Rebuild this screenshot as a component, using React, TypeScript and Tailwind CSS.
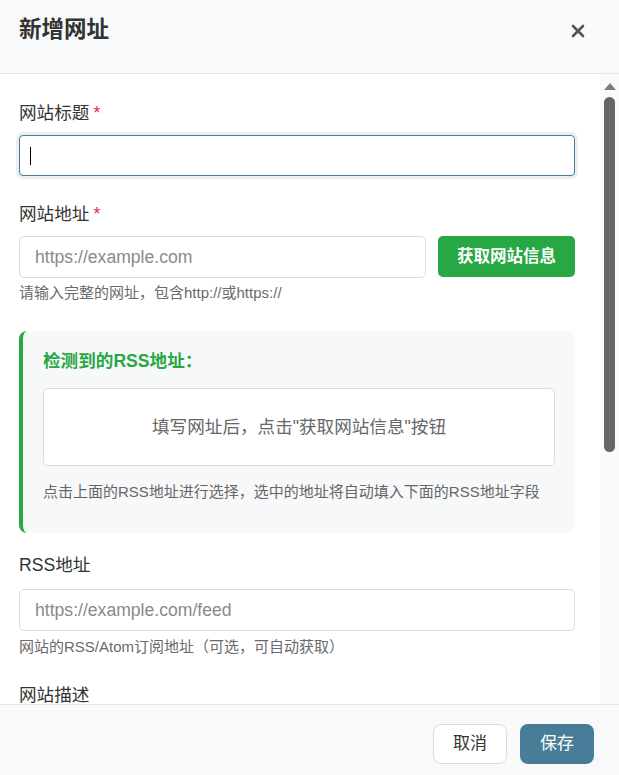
import React from "react";

const font = { fontFamily: '"Liberation Sans", "Noto Sans CJK SC", sans-serif' };

function Label({ text, required, mb = "mb-[9px]" }: { text: string; required?: boolean; mb?: string }) {
  return (
    <div className={`text-[17.6px] leading-[26px] text-[#333] ${mb}`}>
      {text}
      {required && <span className="text-[#dc3545] ml-[4px]">*</span>}
    </div>
  );
}

function Input({ placeholder, className = "" }: { placeholder?: string; className?: string }) {
  return (
    <input
      readOnly
      placeholder={placeholder}
      className={`block w-full h-[42px] rounded-[5px] border border-[#dcdcdc] bg-white px-[15px] text-[17.6px] text-[#333] placeholder:text-[#8a8a8a] outline-none ${className}`}
    />
  );
}

export default function App() {
  return (
    <div className="w-[619px] h-[775px] overflow-hidden bg-white flex flex-col" style={font}>
      {/* Header */}
      <div className="flex-none h-[74px] bg-[#f8f9fa] border-b border-[#e3e6ea] flex items-center justify-between pl-[19px] pr-[34px] pb-[12px]">
        <h2 className="text-[22.5px] font-bold text-[#333] leading-none">新增网址</h2>
        <button className="text-[#555]">
          <svg width="14" height="14" viewBox="0 0 14 14">
            <path d="M2 2 L12 12 M12 2 L2 12" stroke="#555" strokeWidth="2.6" strokeLinecap="round" />
          </svg>
        </button>
      </div>

      {/* Body */}
      <div className="flex-none h-[630px] flex">
        <div className="w-[600px] h-full overflow-hidden pl-[19px] pr-[25px] pt-[26px]">
          {/* Title */}
          <div className="mb-[25px]">
            <Label text="网站标题" required />
            <div className="h-[41px] rounded-[4px] border border-[#4a7c96] bg-white shadow-[0_0_0_3px_rgba(74,124,150,0.12)] flex items-center px-[10px]">
              <span className="w-[1px] h-[18px] bg-black" />
            </div>
          </div>

          {/* URL */}
          <div className="mb-[27px]">
            <Label text="网站地址" required />
            <div className="flex gap-[12px]">
              <Input placeholder="https://example.com" className="flex-1 h-[42px]" />
              <button className="w-[137px] h-[41px] rounded-[5px] bg-[#28a745] text-white font-bold text-[16.5px] flex-none">
                获取网站信息
              </button>
            </div>
            <div className="text-[15px] leading-[22px] text-[#6a6a6a] mt-[4px]">请输入完整的网址，包含http://或https://</div>
          </div>

          {/* RSS detect box */}
          <div className="rounded-[8px] bg-[#f7f8fa] border-l-[4px] border-[#28a745] pl-[20px] pr-[20px] pt-[17px] pb-[30px] mb-[19px]">
            <div className="text-[17.6px] leading-[26px] font-bold text-[#28a745] mb-[14px]">检测到的RSS地址：</div>
            <div className="h-[78px] rounded-[5px] border border-[#dcdcdc] bg-white flex items-center justify-center text-[17.6px] text-[#666]">
              填写网址后，点击"获取网站信息"按钮
            </div>
            <div className="text-[15px] leading-[22px] text-[#666] mt-[15px]">
              点击上面的RSS地址进行选择，选中的地址将自动填入下面的RSS地址字段
            </div>
          </div>

          {/* RSS address */}
          <div className="mb-[24px]">
            <Label text="RSS地址" mb="mb-[11px]" />
            <Input placeholder="https://example.com/feed" />
            <div className="text-[15px] leading-[22px] text-[#6a6a6a] mt-[5px]">网站的RSS/Atom订阅地址（可选，可自动获取）</div>
          </div>

          {/* Description */}
          <div className="mb-[24px]">
            <Label text="网站描述" />
            <textarea readOnly className="block w-full h-[100px] rounded-[5px] border border-[#dcdcdc] px-[15px] py-[8px] text-[17.6px] resize-none outline-none" />
          </div>
        </div>

        {/* Scrollbar */}
        <div className="w-[19px] h-full bg-[#fafafa] flex flex-col items-center pt-[9px]">
          <svg width="12" height="7" viewBox="0 0 12 7">
            <path d="M6 0 L12 7 L0 7 Z" fill="#7d7d7d" />
          </svg>
          <div className="mt-[7px] w-[11px] h-[355px] rounded-full bg-[#666]" />
        </div>
      </div>

      {/* Footer */}
      <div className="flex-none border-t border-[#e3e6ea] bg-[#f8f9fa] flex justify-end gap-[13px] pt-[19px] pr-[25px] pb-[20px]">
        <button className="w-[74px] h-[40px] rounded-[8px] border border-[#dcdcdc] bg-white text-[17px] text-[#333]">取消</button>
        <button className="w-[74px] h-[40px] rounded-[8px] bg-[#487d99] text-[17px] text-white">保存</button>
      </div>
    </div>
  );
}
